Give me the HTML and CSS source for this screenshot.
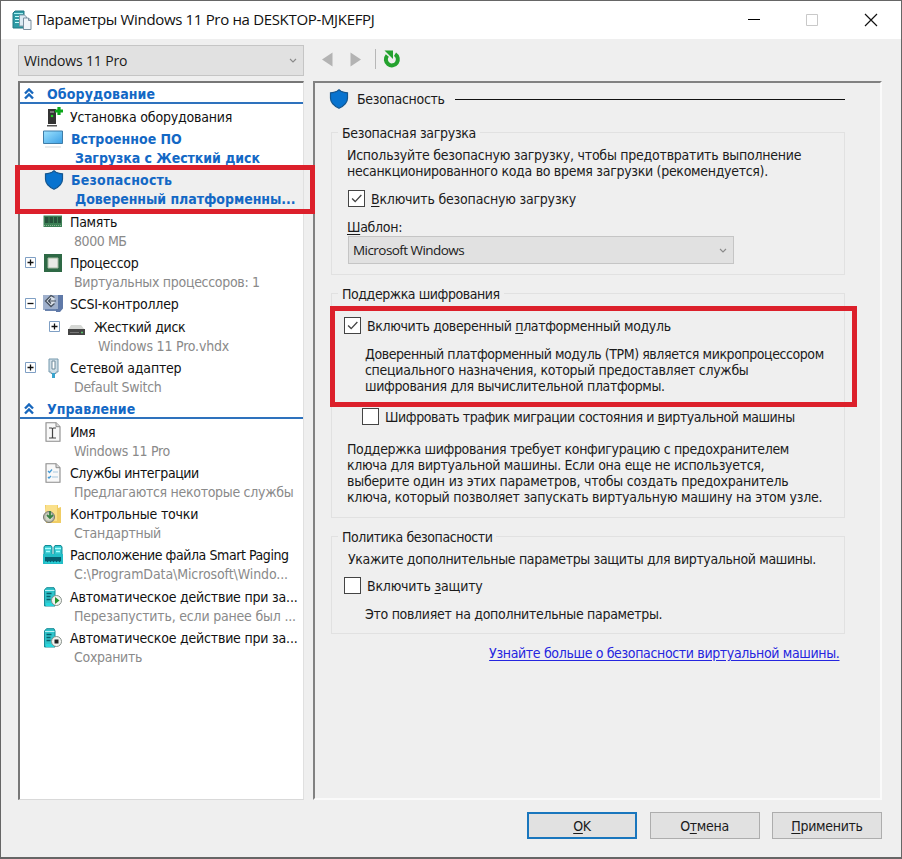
FILE: index.html
```
<!DOCTYPE html>
<html lang="ru">
<head>
<meta charset="utf-8">
<title>Параметры Windows 11 Pro</title>
<link rel="stylesheet" href="styles.css">
</head>
<body>
<svg class="defs" width="0" height="0">
  <symbol id="shield" viewBox="0 0 20 20"><path d="M10 .8 12 2.300q3 1.500 6.500 1.500v5.500q0 6-8.500 10-8.500-4-8.500-10V3.800q3.500 0 6.500-1.500z" fill="#0873cf" stroke="#14568f" stroke-width="1.200"/></symbol>
  <symbol id="chevrons" viewBox="0 0 10 12"><path d="M1 5.500 5 1.500 9 5.500M1 10.500 5 6.500 9 10.500" fill="none" stroke="#1767bd" stroke-width="2.400"/></symbol>
  <symbol id="arrow" viewBox="0 0 8 5"><path d="M1 1 4 4 7 1" fill="none" stroke="#8a8a8a" stroke-width="1.100"/></symbol>
  <symbol id="plus" viewBox="0 0 11 11"><path d="M.5.500h10v10H.5z" fill="#fff" stroke="#7f9fc4"/><path d="M2.500 5.500h6M5.500 2.500v6" stroke="#111" stroke-width="1.300"/></symbol>
  <symbol id="minus" viewBox="0 0 11 11"><path d="M.5.500h10v10H.5z" fill="#fff" stroke="#7f9fc4"/><path d="M2.500 5.500h6" stroke="#111" stroke-width="1.300"/></symbol>
  <symbol id="server" viewBox="0 0 20 20"><path d="M1.500 3 3.500.700h7.500L12 3v16H1.500z" fill="#2fc3ca" stroke="#168b96"/><path d="M2 3.500h9.500" stroke="#b7f3f4"/><path d="M3.500 6.500h5M3.500 9.500h4M3.500 12.500h4" stroke="#075f6b" stroke-width="1.300"/><path d="M3 16h8v3H3z" fill="#27d7dd"/></symbol>
  <symbol id="page" viewBox="0 0 20 20"><path d="M3 .7h10l4 4v14.600H3z" fill="#f8f8f8" stroke="#8b8b8b" stroke-width="1.100"/><path d="M13 .7v4h4" fill="#ddd" stroke="#8b8b8b"/></symbol>
</svg>
<div class="window">
  <header class="titlebar">
    <svg class="app-icon" viewBox="0 0 20 20"><path d="M1 3 3 1h9v17H1z" fill="#2e9ba5" stroke="#237985"/><path d="M2 3.500h9" stroke="#a6eef0"/><path d="M3 6.500h5M3 9.500h4M3 12.500h4" stroke="#c8fcfc"/><path d="M7.500 5h5l2 2v9h-7z" fill="#dceaf3" stroke="#8396a4"/><path d="M11.500 8h5l2.500 2.500v9h-7.500z" fill="#f0f5fa" stroke="#7a8f9f"/><path d="M16.500 8v2.500H19" fill="none" stroke="#7a8f9f"/></svg>
    <span class="caption">Параметры Windows 11 Pro на DESKTOP-MJKEFPJ</span>
    <svg class="controls" viewBox="0 0 124 14"><path d="M1 6.500h12" stroke="#000"/><path d="M59.500 1.500h11v11h-11z" fill="none" stroke="#c9c9c9"/><path d="m118 1 12 12M130 1 118 13" stroke="#111" stroke-width="1.200"/></svg>
  </header>
  <main class="content">
    <aside class="side">
      <div class="select vm"><span>Windows 11 Pro</span><svg><use href="#arrow"/></svg></div>
      <div class="tree">
        <div class="group first"><svg><use href="#chevrons"/></svg><b>Оборудование</b></div>
        <div class="item single"><svg class="icon" viewBox="0 0 20 20"><path d="M5 2h8v15H5z" fill="#343434"/><path d="M4 18h10v1.500H4z" fill="#555"/><path d="M7 5h4" stroke="#bbb"/><circle cx="9" cy="9" r="1.300" fill="#25d128"/><path d="M16 0v8M12 4h8" stroke="#0ba719" stroke-width="3.200"/></svg><span class="name wide">Установка оборудования</span></div>
        <div class="item strong"><svg class="icon" viewBox="0 0 20 20"><defs><linearGradient id="screen" x2="1" y2="1"><stop stop-color="#9ee3ff"/><stop offset="1" stop-color="#3a9fe5"/></linearGradient></defs><path d="M.5 2h19v12.500H.5z" fill="url(#screen)" stroke="#3f7da8"/><path d="M2 18h16" stroke="#d3d9dc"/></svg><span class="name">Встроенное ПО</span><span class="sub">Загрузка с Жесткий диск</span></div>
        <div class="item strong selected"><svg class="icon"><use href="#shield"/></svg><span class="name extra">Безопасность</span><span class="sub">Доверенный платформенны...</span></div>
        <div class="item"><svg class="icon" viewBox="0 0 20 20"><path d="M.5 3.500h18.500v11.500H.5z" fill="#3c8055"/><path d="M2 5h3.500v6H2zm4.500 0H10v6H6.500zM11 5h3v6h-3zm4 0h3v6h-3z" fill="#25523a"/><path d="M1 13.500h18" stroke="#86b591" stroke-dasharray="1 1"/></svg><span class="name">Память</span><span class="sub tight">8000 МБ</span></div>
        <div class="item"><svg class="toggle"><use href="#plus"/></svg><svg class="icon" viewBox="0 0 20 20"><path d="M3 3h14v14H3z" fill="#d6ddd6" stroke="#2e6945" stroke-width="4"/><path d="M5 5h10v10H5z" fill="#e9eae5" stroke="#a4b9a2"/></svg><span class="name">Процессор</span><span class="sub">Виртуальных процессоров: 1</span></div>
        <div class="item single"><svg class="toggle"><use href="#minus"/></svg><svg class="icon" viewBox="0 0 20 20"><path d="M0 1h16v15H0z" fill="#9fb0cc"/><path d="M15 1h5v13.500L17 18h-4v-3h2z" fill="#5f79a8"/><path d="M11.500 3.500 8 1.500 2.500 7 8 12.500l3.500-3" fill="#dce2e9" stroke="#47515f" stroke-width="1.300"/><path d="M5.500 7H13M8 4.500 5.500 7 8 9.500" fill="none" stroke="#47515f" stroke-width="1.200"/><path d="M2 16h11" stroke="#6a83ad" stroke-width="2"/></svg><span class="name wide">SCSI-контроллер</span></div>
        <div class="item child"><svg class="toggle"><use href="#plus"/></svg><svg class="icon" viewBox="0 0 20 20"><path d="M4 8h10l4 5H1z" fill="#d6d8d5"/><path d="M1 12h17v6H1z" fill="#444"/><path d="M3 15.500h9" stroke="#777"/><path d="M14 15.500h2" stroke="#5ac26a" stroke-width="1.500"/></svg><span class="name">Жесткий диск</span><span class="sub wide">Windows 11 Pro.vhdx</span></div>
        <div class="item"><svg class="toggle"><use href="#plus"/></svg><svg class="icon" viewBox="0 0 20 20"><path d="M6 1h9v13h-2v1.500H8V14H6z" fill="#cfdee7" stroke="#7598ad"/><path d="M9 3v8h3V3z" fill="#fff" stroke="#6d899a"/><path d="M9 15h3v5H9z" fill="#3aa4ce"/></svg><span class="name wide">Сетевой адаптер</span><span class="sub">Default Switch</span></div>
        <div class="group"><svg><use href="#chevrons"/></svg><b>Управление</b></div>
        <div class="item"><svg class="icon"><use href="#page"/><path d="M6 6h2.500q1 0 1 1v8q0 1-1 1H6M13 6h-2.500q-1 0-1 1v8q0 1 1 1H13" fill="none" stroke="#444" stroke-width="1.200"/></svg><span class="name tight">Имя</span><span class="sub">Windows 11 Pro</span></div>
        <div class="item"><svg class="icon"><use href="#page"/><path d="m5 8 1.500 1.500L9 6.500M5 14l1 1 2-2" fill="none" stroke="#459bd6" stroke-width="1.300"/><path d="M10 9h5M9 14h6" stroke="#a8c7dd"/></svg><span class="name tight">Службы интеграции</span><span class="sub">Предлагаются некоторые службы</span></div>
        <div class="item"><svg class="icon" viewBox="0 0 20 20"><path d="M2 1h13v3l3-1v16H3z" fill="#f0cd64"/><path d="M3 1h11v16H3z" fill="#fae08a"/><circle cx="6" cy="13" r="5.500" fill="#bbbcb0" stroke="#77786f"/><circle cx="6" cy="13" r="3.500" fill="#d6dacb"/><path d="M7 7v6M4 11l3 3 3-3" fill="none" stroke="#398143" stroke-width="1.800"/></svg><span class="name wide">Контрольные точки</span><span class="sub">Стандартный</span></div>
        <div class="item"><svg class="icon" viewBox="0 0 20 20"><path d="M1 2 2 .5h6L9 2v9H1zm10 0 1-1.500h6L19 2v9h-8z" fill="#30c7cf" stroke="#138b96"/><path d="M2 3.500h6M12 3.500h6M3 6.500h4M13 6.500h4" stroke="#a6ffff" stroke-width="1.300"/><path d="M0 9h20v10H0z" fill="#23bdc6"/><path d="M2 12h16v5H2z" fill="#075f70"/><path d="M2 17h16" stroke="#2de4eb" stroke-dasharray="2 1"/></svg><span class="name tight">Расположение файла Smart Paging</span><span class="sub wider">C:\ProgramData\Microsoft\Windo...</span></div>
        <div class="item"><svg class="icon"><use href="#server"/><circle cx="13.500" cy="13.500" r="5" fill="#f2f4f1" stroke="#87908a"/><path d="m12 10 4.500 3.500L12 17z" fill="#27932d"/></svg><span class="name wide">Автоматическое действие при за...</span><span class="sub wide">Перезапустить, если ранее был ...</span></div>
        <div class="item"><svg class="icon"><use href="#server"/><circle cx="13.500" cy="13.500" r="5" fill="#f2f4f1" stroke="#87908a"/><path d="M11.500 11.500h4v4h-4z" fill="#222"/></svg><span class="name wide">Автоматическое действие при за...</span><span class="sub">Сохранить</span></div>
        <div class="marker tree-marker"></div>
      </div>
    </aside>
    <section class="right">
      <nav class="toolbar"><svg viewBox="0 0 90 24"><path d="M11.500 5.500v14L1 12.500zM29.500 5.500v14L40 12.500z" fill="#b3b3b3"/><path d="M54.500 2v20" stroke="#b7b7b7"/><path d="M66.300 8.500a6 6 0 1 0 7.700-1.200" fill="none" stroke="#24a22e" stroke-width="4"/><path d="M63.500 3.500h8.500v8.500z" fill="#24a22e"/></svg></nav>
      <div class="panel">
        <div class="panel-title"><svg><use href="#shield"/></svg><span>Безопасность</span><i></i></div>
        <section class="box boot"><h2>Безопасная загрузка</h2>
          <p><span class="slightly-wide">Используйте безопасную загрузку, чтобы предотвратить выполнение</span><br>несанкционированного кода во время загрузки (рекомендуется).</p>
          <label class="check"><svg class="mark" viewBox="0 0 17 17"><path d="m3.500 8.500 3.500 3.500 7-7.500"/></svg><span class="wide"><u>В</u>ключить безопасную загрузку</span></label>
          <div class="label"><u>Ш</u>аблон:</div>
          <div class="select template"><span>Microsoft Windows</span><svg><use href="#arrow"/></svg></div>
        </section>
        <section class="box crypt"><h2 class="tight">Поддержка шифрования</h2>
          <label class="check tpm"><svg class="mark" viewBox="0 0 17 17"><path d="m3.500 8.500 3.500 3.500 7-7.500"/></svg><span class="slightly-tight">Включить доверенный <u>п</u>латформенный модуль</span></label>
          <p class="about"><span class="tight">Доверенный платформенный модуль (TPM) является микропроцессором</span><br>специального назначения, который предоставляет службы<br><span class="slightly-tight">шифрования для вычислительной платформы.</span></p>
          <label class="check traffic"><svg class="mark"></svg><span class="tight">Шифровать трафик миграции состояния и <u>в</u>иртуальной машины</span></label>
          <p class="note"><span class="slightly-tight">Поддержка шифрования требует конфигурацию с предохранителем</span><br>ключа для виртуальной машины. Если она еще не используется,<br><span class="slightly-wide">выберите один из этих параметров, чтобы создать предохранитель<br>ключа, который позволяет запускать виртуальную машину на этом узле.</span></p>
          <div class="marker tpm-marker"></div>
        </section>
        <section class="box policy"><h2 class="tight">Политика безопасности</h2>
          <p class="slightly-tight">Укажите дополнительные параметры защиты для виртуальной машины.</p>
          <label class="check"><svg class="mark"></svg><span class="wide">Включить <u>з</u>ащиту</span></label>
          <p class="about">Это повлияет на дополнительные параметры.</p>
        </section>
        <a class="link slightly-tight">Узнайте больше о безопасности виртуальной машины.</a>
      </div>
    </section>
  </main>
  <footer class="buttons"><button class="primary"><u>O</u>K</button><button>О<u>т</u>мена</button><button class="apply"><u>П</u>рименить</button></footer>
</div>
</body>
</html>
```
FILE: styles.css
```
* { box-sizing: border-box; }
body { margin: 0; background: #efefef; color: #1b1b1b; font: 14px/16px "DejaVu Sans Condensed", "DejaVu Sans", sans-serif; font-stretch: condensed; letter-spacing: -.3px; white-space: nowrap; }
.defs { position: absolute; }
svg { display: block; overflow: visible; flex: none; }
u { text-underline-offset: 2px; }
.tight { letter-spacing: -.43px; }
.slightly-tight { letter-spacing: -.35px; }
.slightly-wide { letter-spacing: -.24px; }
.wide { letter-spacing: -.2px; }
.wider { letter-spacing: -.1px; }
.window { width: 902px; height: 859px; border: 1px solid #666; border-width: 1px 1px 2px 1px; display: flex; flex-direction: column; overflow: hidden; }
.titlebar { height: 38px; background: #fff; display: flex; align-items: center; padding-left: 11px; flex: none; }
.app-icon { width: 20px; height: 20px; }
.caption { font: 15px/22px "Open Sans", sans-serif; font-stretch: normal; letter-spacing: -.33px; margin: -2px 0 0 4px; color: #111; }
.controls { width: 124px; height: 14px; margin-left: auto; margin-right: 30px; }
.content { display: flex; height: 762px; }
.side { width: 286px; margin-left: 17px; padding-top: 6px; }
.select { border: 1px solid #c5c5c5; background: #e1e1e1; display: flex; align-items: center; justify-content: space-between; font-family: "Open Sans", sans-serif; font-stretch: normal; }
.select svg { width: 8px; height: 5px; margin-right: 6px; }
.vm { height: 31px; padding-left: 5px; font-size: 14px; letter-spacing: -.15px; }
.tree { position: relative; margin-top: 5px; height: 719px; border: 2px solid #777; border-right: 1px solid #e0e0e0; border-bottom: 1px solid #d9d9d9; background: #fff; }
.group { height: 20px; border-bottom: 2px solid #2e72bd; color: #1368c5; display: flex; align-items: center; padding: 2px 0 0 4px; margin: .5px 0 2px; letter-spacing: .05px; }
.group.first { height: 21px; margin: 0 0 1.500px; letter-spacing: .12px; }
.group svg { width: 10px; height: 12px; margin-right: 13px; }
.item { position: relative; height: 41.250px; padding-left: 50px; }
.single { height: 22.500px; }
.icon { position: absolute; left: 23px; top: 1px; width: 20px; height: 20px; }
.toggle { position: absolute; left: 5px; top: 5px; width: 11px; height: 11px; }
.name { display: block; line-height: 22px; color: #111; }
.sub { display: block; margin: -1px 0 0 4px; line-height: 18px; color: #8a8a8a; }
.child { padding-left: 74px; }
.child .icon { left: 47px; }
.child .toggle { left: 29px; }
.strong { font-weight: bold; padding-left: 51px; letter-spacing: 0; }
.strong .name, .strong .sub { color: #1368c5; }
.strong .sub { letter-spacing: -.05px; margin-top: -1.400px; }
.strong .extra { letter-spacing: .2px; }
.selected { background: #efefef; }
.selected .icon { left: 23.500px; }
.marker { position: absolute; border: 5px solid #dc202b; }
.tree-marker { left: -5px; top: 82px; width: 300px; height: 49px; z-index: 2; }
.right { width: 569px; margin-left: 9px; }
.toolbar { height: 42px; padding: 8px 0 0 8px; }
.toolbar svg { width: 90px; height: 24px; }
.panel { height: 719px; border: 2px solid #818181; border-right: 2px solid #fafafa; border-bottom: 2px solid #fafafa; padding: 6px 35px 0 16px; }
.panel-title { height: 20px; display: flex; align-items: center; }
.panel-title svg { width: 20px; height: 20px; margin: 0 8px 0 -2px; }
.panel-title i { flex: 1; height: 1px; background: #111; margin-left: 10px; }
.box { position: relative; border: 1px solid #e1e1e1; }
h2 { position: absolute; left: 6px; top: -8px; margin: 0; padding: 0 4px; background: #efefef; font: inherit; }
p { margin: 0; }
.boot { margin-top: 23px; height: 143px; padding: 14px 0 0 16px; }
.boot > p, .boot > .label { margin-left: -1px; }
.check { display: flex; align-items: center; height: 17px; }
.mark { width: 17px; height: 17px; border: 1px solid #444; background: #fff; margin-right: 6px; fill: none; stroke: #444; stroke-width: 1.500px; }
.boot .check { margin-top: 11px; }
.boot > .label { margin-top: 12px; }
.template { width: 386px; height: 28px; margin-top: 1px; padding-left: 4px; font-size: 13.500px; }
.template span { letter-spacing: -.55px; }
.crypt { margin-top: 18px; height: 225px; padding: 23px 0 0 12px; }
.crypt .mark, .policy .mark { margin-right: 6px; }
.about { margin: 12px 0 0 21px; }
.traffic { margin: 14px 0 0 18px; }
.note { margin: 16px 0 0 3px; }
.tpm-marker { left: -2px; top: 12px; width: 527px; height: 101px; }
.policy { margin-top: 18px; height: 98px; padding: 14px 0 0 12px; }
.policy p:first-of-type { margin-left: 4px; }
.policy .check { margin-top: 10px; }
.policy .about { margin-top: 12px; }
.link { display: block; width: max-content; margin: 11px 5.500px 0 auto; color: #2525df; text-decoration: underline; text-underline-offset: 2px; }
.buttons { display: flex; justify-content: flex-end; gap: 12.500px; padding: 11px 19px 0 0; }
button { width: 110px; height: 27px; padding: 0; border: 1px solid #adadad; background: #e1e1e1; color: #1b1b1b; font: inherit; letter-spacing: inherit; }
.apply { letter-spacing: -.3px; }
.primary { border: 2px solid #1976bd; }
```
